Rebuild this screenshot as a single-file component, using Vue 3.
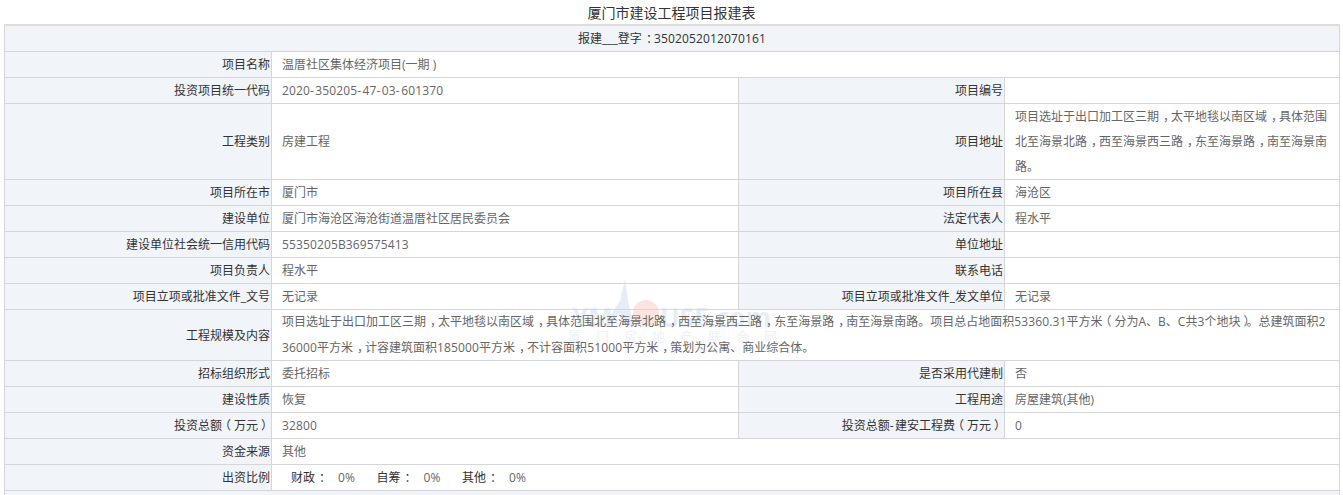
<script setup>
import { h } from 'vue'

const classOf = (s) => {
  if (/^\d/.test(s)) return 'rt-num'
  if (s === '-') return 'rt-dash'
  if (s === '，' || s === '：') return 'rt-mid'
  if (s === '（') return 'rt-open'
  if (s === '）') return 'rt-close'
  return 'rt-txt'
}
const Rich = (props) =>
  h(
    'span',
    null,
    String(props.text || '')
      .split(/(\d+(?:\.\d+)?|-|[，（）：])/)
      .filter(Boolean)
      .map((s) => h('span', { class: classOf(s) }, s))
  )
Rich.props = ['text']

const pairs1 = [
  ['项目所在市', '厦门市', '项目所在县', '海沧区'],
  ['建设单位', '厦门市海沧区海沧街道温厝社区居民委员会', '法定代表人', '程水平'],
  ['建设单位社会统一信用代码', '55350205B369575413', '单位地址', ''],
  ['项目负责人', '程水平', '联系电话', ''],
  ['项目立项或批准文件_文号', '无记录', '项目立项或批准文件_发文单位', '无记录']
]
const pairs2 = [
  ['招标组织形式', '委托招标', '是否采用代建制', '否'],
  ['建设性质', '恢复', '工程用途', '房屋建筑(其他)'],
  ['投资总额（万元）', '32800', '投资总额-建安工程费（万元）', '0']
]
const ratios = [
  ['财政：', '0%'],
  ['自筹：', '0%'],
  ['其他：', '0%']
]
const address = '项目选址于出口加工区三期，太平地毯以南区域，具体范围北至海景北路，西至海景西三路，东至海景路，南至海景南路。'
const scope = address + '项目总占地面积53360.31平方米（分为A、B、C共3个地块）。总建筑面积236000平方米，计容建筑面积185000平方米，不计容面积51000平方米，策划为公寓、商业综合体。'
</script>

<template>
  <div class="page">
    <h1 class="title">厦门市建设工程项目报建表</h1>
    <div class="mark" aria-hidden="true">
      <svg class="mark-art" width="220" height="60" viewBox="0 0 220 60">
        <path d="M65 4 L68 26 L74 50 L62 50 L60 38 L50 50 L44 50 L60 26 Z" fill="#e6edf7" />
        <circle cx="86" cy="38" r="13" fill="#fce4e0" />
      </svg>
      <span class="mark-en mark-left">YM</span>
      <span class="mark-en mark-right">USE.com</span>
      <span class="mark-cn">厦门房地产联合网</span>
    </div>
    <table class="sheet">
      <colgroup>
        <col class="c1" /><col class="c2" /><col class="c3" /><col class="c4" />
      </colgroup>
      <tbody>
        <tr>
          <th colspan="4" class="center"><Rich text="报建___登字：3502052012070161" /></th>
        </tr>
        <tr>
          <th>项目名称</th>
          <td colspan="3"><Rich text="温厝社区集体经济项目(一期 )" /></td>
        </tr>
        <tr>
          <th>投资项目统一代码</th>
          <td><Rich text="2020-350205-47-03-601370" /></td>
          <th>项目编号</th>
          <td></td>
        </tr>
        <tr>
          <th>工程类别</th>
          <td>房建工程</td>
          <th>项目地址</th>
          <td><Rich :text="address" /></td>
        </tr>
        <tr v-for="row in pairs1" :key="row[0]">
          <th>{{ row[0] }}</th>
          <td><Rich :text="row[1]" /></td>
          <th>{{ row[2] }}</th>
          <td>{{ row[3] }}</td>
        </tr>
        <tr>
          <th>工程规模及内容</th>
          <td colspan="3"><div class="wide"><Rich :text="scope" /></div></td>
        </tr>
        <tr v-for="row in pairs2" :key="row[0]">
          <th><Rich :text="row[0]" /></th>
          <td><Rich :text="row[1]" /></td>
          <th><Rich :text="row[2]" /></th>
          <td><Rich :text="row[3]" /></td>
        </tr>
        <tr>
          <th>资金来源</th>
          <td colspan="3">其他</td>
        </tr>
        <tr>
          <th>出资比例</th>
          <td colspan="3">
            <div class="ratios">
              <span v-for="r in ratios" :key="r[0]" class="ratio">
                <span class="ratio-key"><Rich :text="r[0]" /></span>
                <span class="ratio-val"><Rich :text="r[1]" /></span>
              </span>
            </div>
          </td>
        </tr>
        <tr class="foot">
          <th colspan="4"></th>
        </tr>
      </tbody>
    </table>
  </div>
</template>

<style scoped>
.page {
  position: relative;
  width: 1343px;
  height: 495px;
  overflow: hidden;
  padding: 0 4px;
  box-sizing: border-box;
  background: #fff;
  font-family: "Open Sans", "Noto Sans CJK SC", sans-serif;
  font-size: 12px;
  color: #666;
}
.title {
  margin: 0;
  height: 24px;
  line-height: 26px;
  font-size: 14px;
  font-weight: 400;
  color: #333;
  text-align: center;
}
.sheet {
  position: relative;
  z-index: 1;
  width: 1335px;
  border-collapse: collapse;
  table-layout: fixed;
  border-top: 2px solid #ddd;
}
.c1 { width: 267px; }
.c2 { width: 467px; }
.c3 { width: 266px; }
.c4 { width: 335px; }
th, td {
  border: 1px solid #d4d6d9;
  height: 25px;
  padding: 0 8px 0 10px;
  box-sizing: content-box;
  line-height: 25px;
  font-size: 12px;
  font-weight: 400;
  vertical-align: middle;
  word-break: break-all;
}
th {
  padding: 0 1px 0 0;
  background: #f1f5f9;
  color: #333;
  text-align: right;
}
th.center {
  text-align: center;
  padding: 1px 0 0;
  height: 24px;
  line-height: 24px;
}
.wide {
  line-height: 26px;
  margin: -1px 0;
}
.foot th {
  height: 10px;
}
.ratios {
  display: flex;
  padding-left: 9px;
}
.ratio {
  display: inline-flex;
  gap: 11px;
  width: 85.5px;
}
.ratio-key {
  color: #333;
}
.mark {
  position: absolute;
  left: 560px;
  top: 275px;
  width: 220px;
  height: 70px;
  pointer-events: none;
}
.mark-art {
  position: absolute;
  left: 0;
  top: 0;
}
.mark-en {
  position: absolute;
  top: 26px;
  font-size: 26px;
  line-height: 32px;
  font-weight: 700;
  color: #e6edf7;
}
.mark-left { left: 12px; }
.mark-right { left: 100px; }
.mark-cn {
  position: absolute;
  left: 8px;
  top: 53px;
  font-size: 13px;
  line-height: 16px;
  letter-spacing: 15px;
  white-space: nowrap;
  color: #eef1f6;
}
</style>

<style>
.rt-num { letter-spacing: 0.14px; }
.rt-dash { letter-spacing: 1.4px; }
.rt-mid { position: relative; left: 4px; }
.rt-open { position: relative; left: -3px; }
.rt-close { position: relative; left: 3px; }
</style>
